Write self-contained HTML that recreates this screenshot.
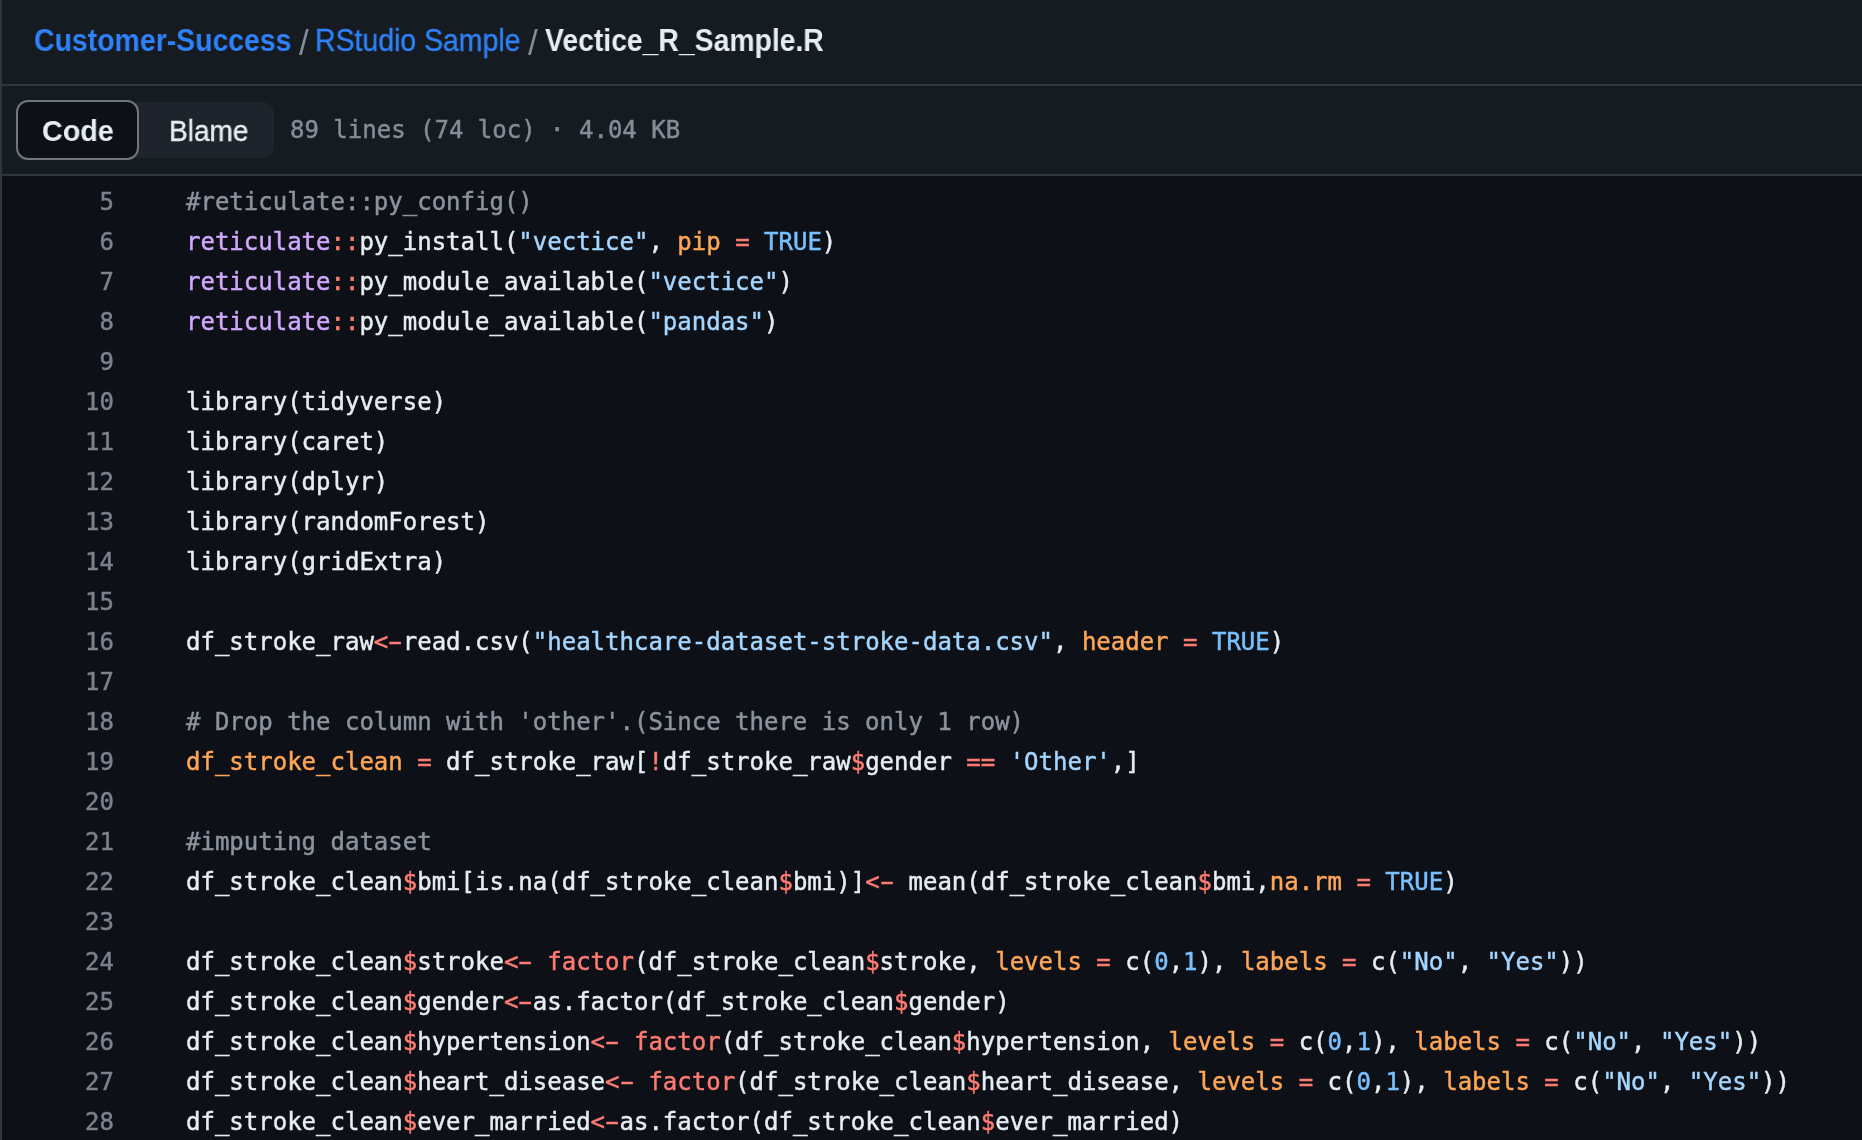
<!DOCTYPE html>
<html lang="en"><head><meta charset="utf-8"><title>Vectice_R_Sample.R</title>
<style>
html,body{margin:0;padding:0;}
body{width:1862px;height:1140px;overflow:hidden;background:#0d1117;position:relative;font-family:"Liberation Sans",sans-serif;color:#e6edf3;}
.lb{position:absolute;left:0;top:0;width:2px;height:1140px;background:#30363d;z-index:5;}
.hdr{position:absolute;left:0;top:0;width:1862px;height:174px;background:#161b22;}
.h1{position:absolute;left:0;top:84px;width:1862px;height:2px;background:#30363d;}
.h2{position:absolute;left:0;top:174px;width:1862px;height:2px;background:#30363d;}
.bc{position:absolute;top:20.6px;font-size:31px;line-height:40px;white-space:nowrap;transform-origin:0 50%;will-change:transform;}
#b1{left:33.7px;color:#2f81f7;font-weight:bold;transform:scaleX(0.917);}
#b2{left:299px;top:23px;font-size:35px;color:#848d97;}
#b3{left:315.2px;color:#2f81f7;-webkit-text-stroke:0.4px;transform:scaleX(0.917);}
#b4{left:528px;top:23px;font-size:35px;color:#848d97;}
#b5{left:544.6px;color:#e6edf3;font-weight:bold;transform:scaleX(0.914);}
.seg{position:absolute;left:18px;top:102px;width:256px;height:56px;background:#1f242c;border-radius:12px;}
.code{position:absolute;left:16px;top:100px;width:119px;height:56px;border:2px solid #6e7681;border-radius:12px;background:#0d1117;}
.tcode{position:absolute;left:41.8px;top:110.5px;line-height:40px;font-size:30px;font-weight:bold;color:#e6edf3;transform:scaleX(0.957);transform-origin:0 50%;will-change:transform;white-space:nowrap;}
.tblame{position:absolute;left:168.9px;top:110.5px;line-height:40px;font-size:30px;color:#e6edf3;transform:scaleX(0.935);transform-origin:0 50%;will-change:transform;white-space:nowrap;-webkit-text-stroke:0.4px;}
.info{position:absolute;left:290px;top:110px;line-height:40px;font-family:"DejaVu Sans Mono","Liberation Mono",monospace;font-size:24px;color:#848d97;white-space:pre;}
.src{position:absolute;left:0;top:182px;width:1862px;font-family:"DejaVu Sans Mono","Liberation Mono",monospace;font-size:24px;}
.ln{height:40px;line-height:40px;white-space:pre;position:relative;}
.no{position:absolute;left:0;width:114px;text-align:right;color:#7a828e;}
.cd{position:absolute;left:186px;color:#e6edf3;}
.src,.info{-webkit-text-stroke:0.45px;will-change:transform;}
.h{display:inline-block;font-style:normal;transform:scaleX(1.75);}
.c{color:#8b949e;} .e{color:#d2a8ff;} .k{color:#ff7b72;} .s{color:#a5d6ff;} .v{color:#ffa657;} .n{color:#79c0ff;}
</style></head><body>
<div class="hdr"></div><div class="h1"></div><div class="h2"></div><div class="lb"></div>
<a class="bc" id="b1">Customer-Success</a><span class="bc" id="b2">/</span><a class="bc" id="b3">RStudio Sample</a><span class="bc" id="b4">/</span><span class="bc" id="b5">Vectice_R_Sample.R</span>
<div class="seg"></div><div class="code"></div>
<div class="tcode">Code</div><div class="tblame">Blame</div>
<div class="info">89 lines (74 loc) · 4.04 KB</div>
<div class="src">
<div class="ln"><span class="no">5</span><span class="cd"><span class="c">#reticulate::py_config()</span></span></div>
<div class="ln"><span class="no">6</span><span class="cd"><span class="e">reticulate</span><span class="k">::</span>py_install(<span class="s">"vectice"</span>, <span class="v">pip</span> <span class="k">=</span> <span class="n">TRUE</span>)</span></div>
<div class="ln"><span class="no">7</span><span class="cd"><span class="e">reticulate</span><span class="k">::</span>py_module_available(<span class="s">"vectice"</span>)</span></div>
<div class="ln"><span class="no">8</span><span class="cd"><span class="e">reticulate</span><span class="k">::</span>py_module_available(<span class="s">"pandas"</span>)</span></div>
<div class="ln"><span class="no">9</span><span class="cd"></span></div>
<div class="ln"><span class="no">10</span><span class="cd">library(tidyverse)</span></div>
<div class="ln"><span class="no">11</span><span class="cd">library(caret)</span></div>
<div class="ln"><span class="no">12</span><span class="cd">library(dplyr)</span></div>
<div class="ln"><span class="no">13</span><span class="cd">library(randomForest)</span></div>
<div class="ln"><span class="no">14</span><span class="cd">library(gridExtra)</span></div>
<div class="ln"><span class="no">15</span><span class="cd"></span></div>
<div class="ln"><span class="no">16</span><span class="cd">df_stroke_raw<span class="k">&lt;<i class="h">-</i></span>read.csv(<span class="s">"healthcare-dataset-stroke-data.csv"</span>, <span class="v">header</span> <span class="k">=</span> <span class="n">TRUE</span>)</span></div>
<div class="ln"><span class="no">17</span><span class="cd"></span></div>
<div class="ln"><span class="no">18</span><span class="cd"><span class="c"># Drop the column with 'other'.(Since there is only 1 row)</span></span></div>
<div class="ln"><span class="no">19</span><span class="cd"><span class="v">df_stroke_clean</span> <span class="k">=</span> df_stroke_raw[<span class="k">!</span>df_stroke_raw<span class="k">$</span>gender <span class="k">==</span> <span class="s">'Other'</span>,]</span></div>
<div class="ln"><span class="no">20</span><span class="cd"></span></div>
<div class="ln"><span class="no">21</span><span class="cd"><span class="c">#imputing dataset</span></span></div>
<div class="ln"><span class="no">22</span><span class="cd">df_stroke_clean<span class="k">$</span>bmi[is.na(df_stroke_clean<span class="k">$</span>bmi)]<span class="k">&lt;<i class="h">-</i></span> mean(df_stroke_clean<span class="k">$</span>bmi,<span class="v">na.rm</span> <span class="k">=</span> <span class="n">TRUE</span>)</span></div>
<div class="ln"><span class="no">23</span><span class="cd"></span></div>
<div class="ln"><span class="no">24</span><span class="cd">df_stroke_clean<span class="k">$</span>stroke<span class="k">&lt;<i class="h">-</i></span> <span class="k">factor</span>(df_stroke_clean<span class="k">$</span>stroke, <span class="v">levels</span> <span class="k">=</span> c(<span class="n">0</span>,<span class="n">1</span>), <span class="v">labels</span> <span class="k">=</span> c(<span class="s">"No"</span>, <span class="s">"Yes"</span>))</span></div>
<div class="ln"><span class="no">25</span><span class="cd">df_stroke_clean<span class="k">$</span>gender<span class="k">&lt;<i class="h">-</i></span>as.factor(df_stroke_clean<span class="k">$</span>gender)</span></div>
<div class="ln"><span class="no">26</span><span class="cd">df_stroke_clean<span class="k">$</span>hypertension<span class="k">&lt;<i class="h">-</i></span> <span class="k">factor</span>(df_stroke_clean<span class="k">$</span>hypertension, <span class="v">levels</span> <span class="k">=</span> c(<span class="n">0</span>,<span class="n">1</span>), <span class="v">labels</span> <span class="k">=</span> c(<span class="s">"No"</span>, <span class="s">"Yes"</span>))</span></div>
<div class="ln"><span class="no">27</span><span class="cd">df_stroke_clean<span class="k">$</span>heart_disease<span class="k">&lt;<i class="h">-</i></span> <span class="k">factor</span>(df_stroke_clean<span class="k">$</span>heart_disease, <span class="v">levels</span> <span class="k">=</span> c(<span class="n">0</span>,<span class="n">1</span>), <span class="v">labels</span> <span class="k">=</span> c(<span class="s">"No"</span>, <span class="s">"Yes"</span>))</span></div>
<div class="ln"><span class="no">28</span><span class="cd">df_stroke_clean<span class="k">$</span>ever_married<span class="k">&lt;<i class="h">-</i></span>as.factor(df_stroke_clean<span class="k">$</span>ever_married)</span></div>
</div>
</body></html>
